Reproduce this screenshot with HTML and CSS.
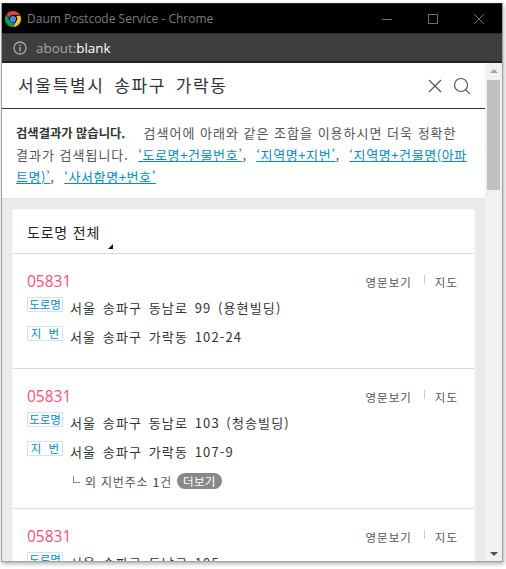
FILE: index.html
```html
<!DOCTYPE html>
<html lang="ko">
<head>
    <meta charset="UTF-8">
    <meta name="viewport" content="width=device-width, initial-scale=1.0">
    <title>Daum Postcode Service</title>
    <link rel="stylesheet" href="styles.css">
</head>
<body>
    <div class="window">
        <div class="titlebar">
            <svg class="chrome-logo" width="16" height="16" viewBox="0 0 16 16">
                <path d="M8 0a8 8 0 0 1 7 4H8a4 4 0 0 0-3.900 3L1.600 3A8 8 0 0 1 8 0z" fill="#db4437"/>
                <path d="M15.200 4.500A8 8 0 0 1 8 16l3.300-5.700A4 4 0 0 0 11 5z" fill="#fbc02d"/>
                <path d="M1.300 3.600L5 9.800A4 4 0 0 0 10.800 11L7.600 16A8 8 0 0 1 1.300 3.600z" fill="#0f9d58"/>
                <circle cx="8" cy="8" r="3.100" fill="#4285f4"/>
            </svg>
            <span class="title-text">Daum Postcode Service - Chrome</span>
            <div class="win-buttons">
                <svg width="12" height="12" viewBox="0 0 12 12"><path d="M1 6.500h10" stroke="#6e6e6e" fill="none"/></svg>
                <svg width="12" height="12" viewBox="0 0 12 12"><rect x="1.500" y="1.500" width="9" height="9" stroke="#6e6e6e" fill="none"/></svg>
                <svg width="12" height="12" viewBox="0 0 12 12"><path d="M1 1l10 10M11 1L1 11" stroke="#6e6e6e" fill="none"/></svg>
            </div>
        </div>
        <div class="addressbar">
            <svg width="14" height="14" viewBox="0 0 14 14">
                <circle cx="7" cy="7" r="6" stroke="#a8a8a8" stroke-width="1.300" fill="none"/>
                <path d="M7 6v4.500M7 3.500v1.500" stroke="#a8a8a8" stroke-width="1.500" fill="none"/>
            </svg>
            <span class="url"><span class="url-dim">about:</span>blank</span>
        </div>
        <div class="viewport">
            <div class="page">
                <div class="search">
                    <span class="search-text">서울특별시 송파구 가락동</span>
                    <svg class="search-icon" width="16" height="16" viewBox="0 0 16 16"><path d="M2 2l12 12M14 2L2 14" stroke="#555" stroke-width="1.200" fill="none"/></svg>
                    <svg class="search-icon" width="18" height="18" viewBox="0 0 18 18"><circle cx="8" cy="8" r="6.500" stroke="#555" stroke-width="1.200" fill="none"/><path d="M12.800 12.800l4 4" stroke="#555" stroke-width="1.200" fill="none"/></svg>
                </div>
                <div class="notice">
                    <strong>검색결과가 많습니다.</strong>&nbsp; 검색어에 아래와 같은 조합을 이용하시면 더욱 정확한 결과가 검색됩니다. &nbsp;<a href="#">‘도로명+건물번호’</a>, &nbsp;<a href="#">‘지역명+지번’</a>, &nbsp;<a href="#">‘지역명+건물명(아파트명)’</a>, &nbsp;<a href="#">‘사서함명+번호’</a>
                </div>
                <div class="results">
                    <div class="card">
                        <div class="card-head">도로명 전체<span class="corner"></span></div>

                        <div class="item">
                            <div class="item-top">
                                <span class="zip">05831</span>
                                <div class="links"><span>영문보기</span><span class="sep"></span><span>지도</span></div>
                            </div>
                            <div class="addr"><span class="tag">도로명</span><span class="addr-text">서울 송파구 동남로 99 (용현빌딩)</span></div>
                            <div class="addr"><span class="tag">지 번</span><span class="addr-text">서울 송파구 가락동 102-24</span></div>
                        </div>

                        <div class="item">
                            <div class="item-top">
                                <span class="zip">05831</span>
                                <div class="links"><span>영문보기</span><span class="sep"></span><span>지도</span></div>
                            </div>
                            <div class="addr"><span class="tag">도로명</span><span class="addr-text">서울 송파구 동남로 103 (청송빌딩)</span></div>
                            <div class="addr"><span class="tag">지 번</span><span class="addr-text">서울 송파구 가락동 107-9</span></div>
                            <div class="more"><span class="elbow"></span>외 지번주소 <b>1</b>건<span class="more-btn">더보기</span></div>
                        </div>

                        <div class="item">
                            <div class="item-top">
                                <span class="zip">05831</span>
                                <div class="links"><span>영문보기</span><span class="sep"></span><span>지도</span></div>
                            </div>
                            <div class="addr"><span class="tag">도로명</span><span class="addr-text">서울 송파구 동남로 105</span></div>
                        </div>
                    </div>
                </div>
            </div>
            <div class="scrollbar">
                <span class="arrow-up"></span>
                <div class="track"><div class="thumb"></div></div>
                <span class="arrow-down"></span>
            </div>
        </div>
    </div>
</body>
</html>
```
FILE: styles.css
```css
html, body { margin: 0; padding: 0; background: #fff; overflow: hidden; }
body { height: 569px; font-family: "Noto Sans CJK KR", "Noto Sans", sans-serif; color: #333; }
.window { width: 502px; height: 559px; margin: 3px 0 0 1px; display: flex; flex-direction: column; overflow: hidden; border-left: 1px solid #a0a0a0; border-right: 1px solid #a0a0a0; border-bottom: 1px solid #a0a0a0; box-sizing: border-box; box-shadow: 1px 2px 4px rgba(0,0,0,0.3); }

.titlebar { height: 31px; flex: none; background: #000; display: flex; align-items: center; padding: 0 0 0 3px; box-sizing: border-box; border-top: 1px solid #222; border-bottom: 1px solid #2c2c2c; }
.chrome-logo { flex: none; }
.title-text { margin-left: 6px; font: 12px "Open Sans", sans-serif; color: #7c7c7c; }
.win-buttons { margin-left: auto; display: flex; gap: 34px; padding-right: 17px; }

.addressbar { height: 29px; flex: none; background: #3e3e3e; border-bottom: 2px solid #222; box-sizing: border-box; display: flex; align-items: center; gap: 9px; padding-left: 11px; }
.url { font: 13.400px "Open Sans", sans-serif; color: #fff; }
.url-dim { color: #a8a8a8; }

.viewport { flex: 1; min-height: 0; display: flex; }
.page { flex: 1; min-width: 0; overflow: hidden; background: #ebebeb; }

.search { height: 46px; box-sizing: border-box; background: #fff; border-bottom: 1px solid #333; display: flex; align-items: center; padding: 0 14px 0 16px; gap: 10px; }
.search-text { flex: 1; padding-bottom: 2px; font-size: 17px; letter-spacing: 1.700px; word-spacing: 3px; color: #333; }

.notice { height: 90px; box-sizing: border-box; background: #fff; border-bottom: 1px solid #e2e2e2; padding: 13px 17px 0 14px; font-size: 13px; line-height: 22px; letter-spacing: 1px; color: #555; }
.notice strong { margin-right: 9px; font-size: 12.300px; letter-spacing: 0; color: #333; }
.notice a { letter-spacing: 0.600px; color: #008bd3; }

.results { padding: 10px 10px 0 10px; }
.card { background: #fff; border: 1px solid #f7f7f7; border-bottom: 0; }
.card-head { position: relative; height: 44px; box-sizing: border-box; padding: 12px 0 0 14px; border-bottom: 1px solid #dcdcdc; font-size: 14px; line-height: 20px; letter-spacing: 0.800px; color: #222; }
.corner { position: absolute; left: 95px; top: 34px; border-style: solid; border-width: 0 0 5px 5px; border-color: transparent transparent #111 transparent; }

.item { padding: 16px 16px 19px 14px; border-bottom: 1px solid #dcdcdc; }
.item-top { display: flex; justify-content: space-between; align-items: center; height: 20px; }
.zip { padding-top: 2px; font: 15.500px "Open Sans", sans-serif; color: #fb4f77; }
.links { display: flex; align-items: center; padding-top: 4px; font-size: 11.500px; letter-spacing: 1px; color: #555; }
.sep { width: 1px; height: 9px; margin: 0 10px 6px 12px; background: #ccc; }
.addr { display: flex; align-items: flex-start; margin-top: 7px; height: 23px; font-size: 13px; color: #333; }
.addr + .addr { margin-top: 6px; }
.addr-text { margin-top: 2px; letter-spacing: 1.150px; word-spacing: 1.800px; line-height: 18px; }
.tag { flex: none; width: 34px; height: 13px; line-height: 13px; margin-right: 7px; text-align: center; border: 1px solid #cfe3f2; font-size: 11.500px; word-spacing: 4px; color: #008bd3; }
.more { display: flex; align-items: center; margin: 9px 0 0 46px; height: 16px; font-size: 12px; letter-spacing: 0.800px; white-space: pre-wrap; color: #555; }
.more b { font-weight: 500; }
.elbow { width: 6px; height: 6px; margin: 0 5px 3px 0; border-left: 1px solid #888; border-bottom: 1px solid #888; }
.more-btn { margin-left: 5px; padding: 0 6px; height: 16px; line-height: 16px; border-radius: 8px; background: #888; color: #fff; font-size: 11.500px; letter-spacing: 0.300px; }

.scrollbar { width: 17px; flex: none; background: #f1f1f1; display: flex; flex-direction: column; align-items: center; }
.track { flex: 1; width: 100%; display: flex; justify-content: center; }
.thumb { width: 13px; height: 110px; margin-top: 7px; background: #c1c1c1; }
.arrow-up { margin-top: 6px; border-style: solid; border-width: 0 4px 4px 4px; border-color: transparent transparent #a3a3a3 transparent; }
.arrow-down { margin-bottom: 5px; border-style: solid; border-width: 4px 4px 0 4px; border-color: #505050 transparent transparent transparent; }
```
